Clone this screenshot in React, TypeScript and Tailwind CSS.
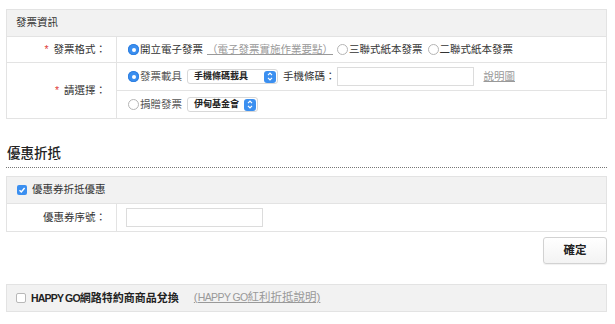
import React from 'react';

const font = 'font-["Helvetica_Neue","Liberation_Sans","Noto_Sans_CJK_TC",sans-serif]';

function Radio({ checked }: { checked?: boolean }) {
  return checked ? (
    <span className="inline-flex w-[11px] h-[11px] rounded-full bg-[#3b8ff0] items-center justify-center shrink-0 shadow-[inset_0_0_0_1px_#2f7fe0]">
      <span className="w-[4px] h-[4px] rounded-full bg-white" />
    </span>
  ) : (
    <span className="inline-block w-[11px] h-[11px] rounded-full bg-white border border-[#b5b5b5] shrink-0" />
  );
}

function Select({ label, w }: { label: string; w: string }) {
  return (
    <span className={`inline-flex items-center justify-between h-[15px] bg-white border border-[#d8d8d8] rounded-[3px] pl-[6px] pr-[1px] ${w}`}>
      <span className="text-[9px] font-bold text-[#222]">{label}</span>
      <span className="w-[12px] h-[12px] rounded-[3px] bg-[#3b8ff0] flex items-center justify-center">
        <svg width="6" height="9" viewBox="0 0 6 9" fill="none" stroke="white" strokeWidth="1.2">
          <path d="M1 3.2 L3 1.2 L5 3.2" />
          <path d="M1 5.8 L3 7.8 L5 5.8" />
        </svg>
      </span>
    </span>
  );
}

function Label({ text, req }: { text: string; req?: boolean }) {
  return (
    <div className="w-[110px] shrink-0 border-r border-[#e3e3e3] flex items-center justify-end pr-[10px] text-[10.5px] text-[#333]">
      {req && <span className="text-[#e0403a] mr-[5px]">*</span>}
      {text}
    </div>
  );
}

export default function App() {
  return (
    <div className={`min-h-screen bg-white pt-[9px] px-[6px] ${font} text-[#333]`}>
      <div className="w-[601px]">
        {/* 發票資訊 */}
        <div className="border border-[#e3e3e3]">
          <div className="h-[27px] bg-[#f2f2f2] border-b border-[#e3e3e3] flex items-center pl-[9px] text-[10.5px]">發票資訊</div>
          <div className="flex h-[26px] border-b border-[#e3e3e3]">
            <Label text="發票格式：" req />
            <div className="flex items-center pl-[11px] text-[10.5px] gap-[1px]">
              <Radio checked />
              <span>開立電子發票</span>
              <span className="text-[#999] underline ml-[3px] mr-[3px]">（電子發票實施作業要點）</span>
              <Radio />
              <span>三聯式紙本發票</span>
              <span className="ml-[3px]" />
              <Radio />
              <span>二聯式紙本發票</span>
            </div>
          </div>
          <div className="flex">
            <Label text="請選擇：" req />
            <div className="flex-1">
              <div className="h-[28px] border-b border-[#e3e3e3] flex items-center pl-[11px] text-[10.5px]">
                <Radio checked />
                <span className="ml-[1px] mr-[5px] text-[#555]">發票載具</span>
                <Select label="手機條碼載具" w="w-[91px]" />
                <span className="ml-[5px]">手機條碼：</span>
                <span className="w-[137px] h-[19px] border border-[#dcdcdc] bg-white ml-[1px]" />
                <span className="ml-[10px] text-[#999] underline">說明圖</span>
              </div>
              <div className="h-[27px] flex items-center pl-[11px] text-[10.5px]">
                <Radio />
                <span className="ml-[1px] mr-[5px] text-[#555]">捐贈發票</span>
                <Select label="伊甸基金會" w="w-[71px]" />
              </div>
            </div>
          </div>
        </div>

        {/* 優惠折抵 */}
        <div className="mt-[26px] h-[23px] border-b border-dotted border-[#777] text-[13.5px] font-medium text-[#222] pl-[1px] leading-[18px]">優惠折抵</div>
        <div className="mt-[8px] border border-[#e3e3e3]">
          <div className="h-[27px] bg-[#f2f2f2] border-b border-[#e3e3e3] flex items-center pl-[10px] text-[10.5px]">
            <span className="w-[10px] h-[10px] rounded-[2px] bg-[#3b8ff0] flex items-center justify-center mr-[5px]">
              <svg width="8" height="8" viewBox="0 0 8 8" fill="none" stroke="white" strokeWidth="1.4">
                <path d="M1.5 4.2 L3.3 6 L6.6 2" />
              </svg>
            </span>
            優惠券折抵優惠
          </div>
          <div className="flex h-[27px]">
            <Label text="優惠券序號：" />
            <div className="flex items-center pl-[9px]">
              <span className="w-[137px] h-[19px] border border-[#dcdcdc] bg-white" />
            </div>
          </div>
        </div>

        <div className="flex justify-end mt-[5px]">
          <button className="w-[64px] h-[27px] rounded-[3px] border border-[#d2d2d2] bg-gradient-to-b from-white to-[#f3f3f3] text-[11.5px] font-bold text-[#222] shadow-[0_1px_1px_rgba(0,0,0,0.06)]">
            確定
          </button>
        </div>

        <div className="mt-[20px] h-[28px] bg-[#f2f2f2] border border-[#e3e3e3] flex items-center pl-[9px] text-[11px]">
          <span className="w-[10px] h-[10px] rounded-[2px] bg-white border border-[#b8b8b8] mr-[5px]" />
          <span className="font-bold text-[#222]">
            <span className="text-[10.5px] tracking-[-0.8px]">HAPPY GO</span>網路特約商商品兌換
          </span>
          <span className="ml-[15px] text-[11.5px] text-[#999] underline">
            (<span className="text-[10.5px] tracking-[-0.6px]">HAPPY GO</span>紅利折抵說明)
          </span>
        </div>
      </div>
    </div>
  );
}
